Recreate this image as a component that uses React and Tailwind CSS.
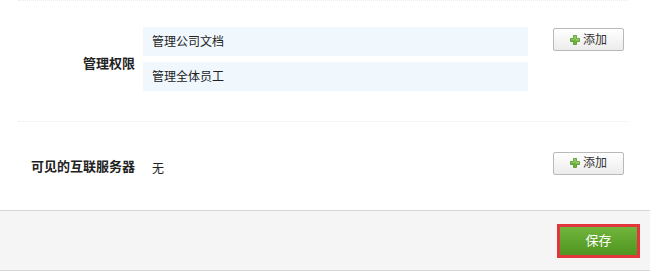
import React from 'react';

const font = { fontFamily: '"Liberation Sans", "Noto Sans CJK SC", sans-serif' };

function PlusIcon() {
  return (
    <svg width="10" height="10" viewBox="0 0 10 10" className="shrink-0">
      <path d="M3.5 0.5h3v3h3v3h-3v3h-3v-3h-3v-3h3z" fill="#6cb33e" stroke="#4e9226" strokeWidth="0.8" />
      <path d="M4.2 1.3h1.6v2.9h2.9v0.9h-2.9M4.2 1.3v2.9H1.3" fill="none" stroke="#b6e08c" strokeWidth="0.6" />
    </svg>
  );
}

function AddButton() {
  return (
    <button className="flex h-[23px] w-[71px] items-center justify-center gap-[3px] rounded-[2px] border border-[#b9b9b9] bg-gradient-to-b from-white to-[#ececec] text-[12px] text-[#333]">
      <PlusIcon />
      <span>添加</span>
    </button>
  );
}

export default function App() {
  const perms = ['管理公司文档', '管理全体员工'];

  return (
    <div className="h-[271px] w-[650px] bg-white text-[#222]" style={font}>
      {/* 管理权限 */}
      <div className="ml-[18px] mr-[22px] h-[122px] border-y border-dotted border-[#ebebeb]">
        <div className="flex pt-[26px]">
          <div className="flex w-[117px] items-center justify-end pt-[10px] text-[13px] font-bold">管理权限</div>
          <div className="ml-[8px] flex w-[385px] flex-col gap-[6px]">
            {perms.map((p) => (
              <div key={p} className="flex h-[29px] items-center bg-[#f0f7fd] pl-[9px] text-[12px]">
                {p}
              </div>
            ))}
          </div>
          <div className="ml-[25px] pt-[1px]">
            <AddButton />
          </div>
        </div>
      </div>

      {/* 可见的互联服务器 */}
      <div className="flex h-[88px] items-center">
        <div className="w-[135px] pt-[2px] text-right text-[13px] font-bold">可见的互联服务器</div>
        <div className="ml-[17px] w-[376px] pt-[6px] text-[12px]">无</div>
        <div className="ml-[25px] pb-[6px]">
          <AddButton />
        </div>
      </div>

      {/* footer */}
      <div className="flex h-[61px] items-center justify-end border-y border-[#d6d6d6] bg-[#f5f5f5] pr-[10px]">
        <button className="h-[34px] w-[83px] border-[3px] border-[#e2353c] bg-gradient-to-b from-[#71b53c] to-[#4f951f] text-[13px] text-white">
          保存
        </button>
      </div>
    </div>
  );
}
